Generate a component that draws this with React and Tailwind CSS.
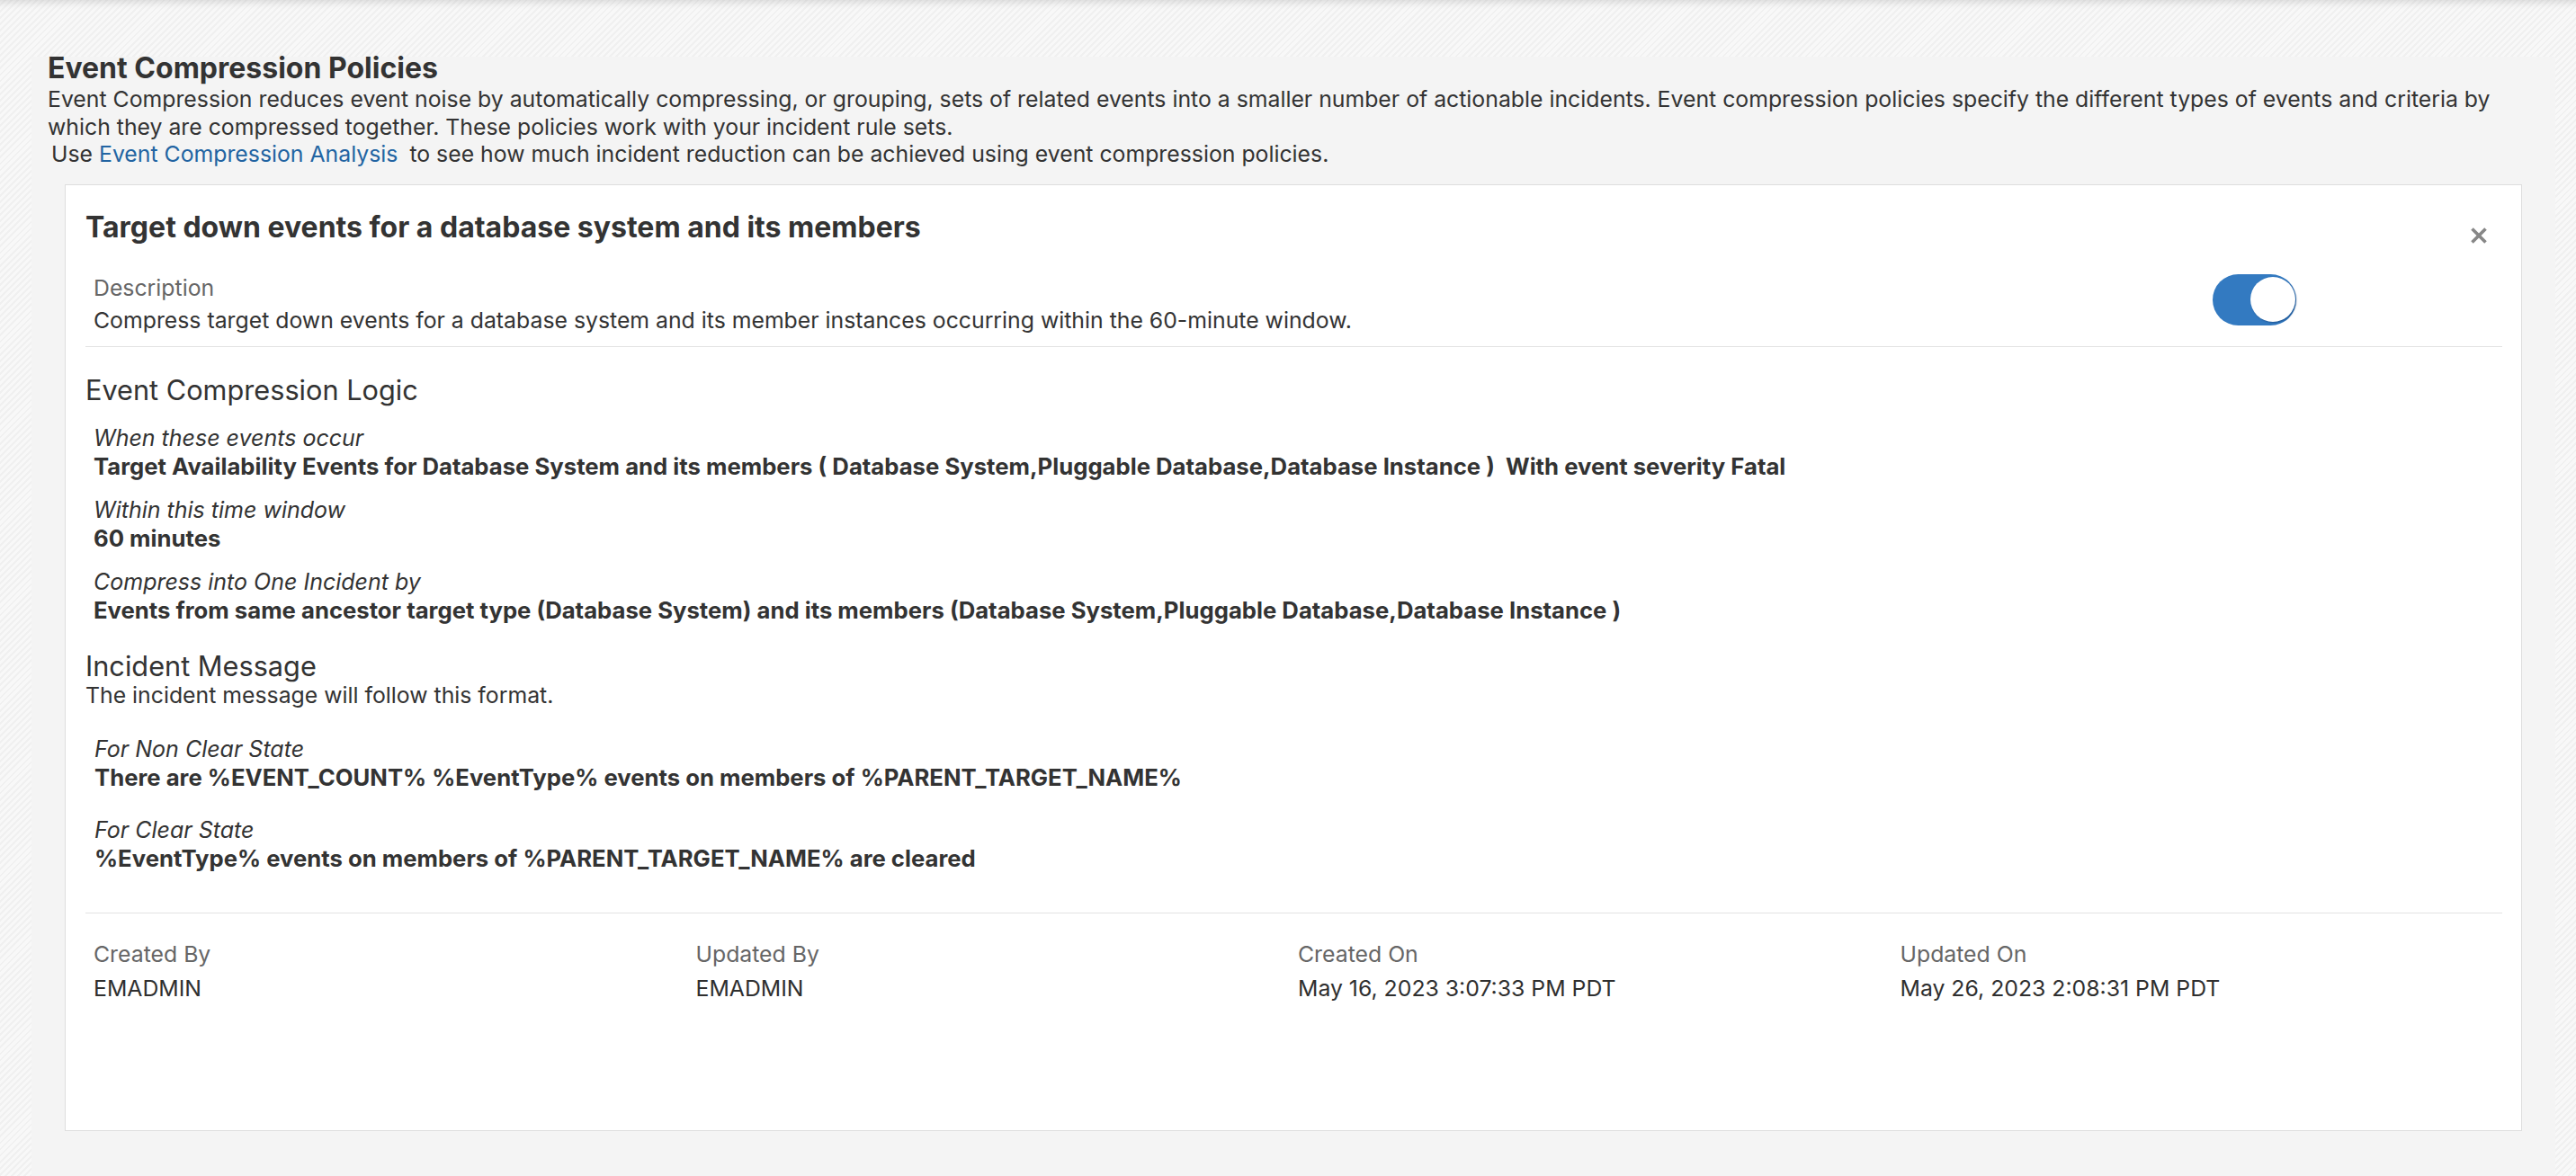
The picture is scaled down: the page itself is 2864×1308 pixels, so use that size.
import React from "react";

function Toggle() {
  return (
    <div className="relative mr-[229px] h-[57px] w-[93px] shrink-0 rounded-full bg-[#337ac1]">
      <div className="absolute right-[1px] top-[3.5px] h-[50px] w-[50px] rounded-full bg-white shadow-[1px_1px_2px_rgba(0,40,90,0.45)]" />
    </div>
  );
}

function CloseIcon() {
  return (
    <svg width="20" height="20" viewBox="0 0 20 20" className="block">
      <path d="M2.5 2.5 L17.5 17.5 M17.5 2.5 L2.5 17.5" stroke="#878787" strokeWidth="3.6" strokeLinecap="butt" fill="none" />
    </svg>
  );
}

function LogicItem({ label, value, className = "" }) {
  return (
    <div className={className}>
      <div className="text-[25px] italic leading-[31px] text-[#333333]">{label}</div>
      <div className="whitespace-nowrap text-[25.7px] font-bold leading-[31px] text-[#333333]">{value}</div>
    </div>
  );
}

function Meta({ label, value }) {
  return (
    <div>
      <div className="text-[24.8px] leading-[31px] text-[#666666]">{label}</div>
      <div className="mt-[7px] text-[24.8px] leading-[31px] text-[#2f2f2f]">{value}</div>
    </div>
  );
}

export default function App() {
  return (
    <div className="flex min-h-[1308px] flex-col bg-[repeating-linear-gradient(-45deg,#f0f0f0_0px,#f0f0f0_2px,#f8f8f8_2px,#f8f8f8_5px)] pl-[35px] pr-[23px] pt-[63px] font-['Inter',sans-serif] text-[#333333] shadow-[inset_0_10px_8px_-8px_rgba(0,0,0,0.14)]">
      <div className="flex-1 bg-[#f4f4f4] px-[18px]">
        <h1 className="text-[32px] font-bold leading-[26px] text-[#333333]">Event Compression Policies</h1>
        <div className="mt-[6px] whitespace-nowrap text-[24.8px] leading-[30.5px] text-[#333333]">
          <div>
            Event Compression reduces event noise by automatically compressing, or grouping, sets of related events into a smaller number of actionable incidents. Event compression policies specify the different types of events and criteria by
          </div>
          <div>which they are compressed together. These policies work with your incident rule sets.</div>
          <div className="pl-[4px]">
            Use <a className="mr-[6px] text-[#2264a2]">Event Compression Analysis</a> to see how much incident reduction can be achieved using event compression policies.
          </div>
        </div>

        <div className="mx-[19px] mt-[18px] border border-[#dedede] bg-white pb-[142px] pl-[22px] pr-[21px] pt-[29px]">
          <div className="flex items-start justify-between">
            <h2 className="text-[32px] font-bold leading-[36px] text-[#333333]">
              Target down events for a database system and its members
            </h2>
            <button className="mr-[16px] mt-[17px]">
              <CloseIcon />
            </button>
          </div>

          <div className="mt-[33px] flex items-start justify-between pl-[9px]">
            <div>
              <div className="text-[24.8px] leading-[31px] text-[#666666]">Description</div>
              <div className="mt-[5px] text-[24.8px] leading-[31px] text-[#333333]">
                Compress target down events for a database system and its member instances occurring within the 60-minute window.
              </div>
            </div>
            <Toggle />
          </div>

          <div className="mt-[13px] h-px bg-[#e3e3e3]" />

          <h3 className="mt-[30px] text-[30.7px] font-normal leading-[36px] text-[#333333]">Event Compression Logic</h3>
          <div className="mt-[20px] pl-[9px]">
            <LogicItem
              label="When these events occur"
              value={"Target Availability Events for Database System and its members ( Database System,Pluggable Database,Database Instance )\u00a0 With event severity Fatal"}
            />
            <LogicItem className="mt-[18px]" label="Within this time window" value="60 minutes" />
            <LogicItem
              className="mt-[18px]"
              label="Compress into One Incident by"
              value="Events from same ancestor target type (Database System) and its members (Database System,Pluggable Database,Database Instance )"
            />
          </div>

          <h3 className="mt-[29px] text-[30.7px] font-normal leading-[36px] text-[#333333]">Incident Message</h3>
          <div className="-mt-[1px] text-[24.8px] leading-[31px] text-[#333333]">The incident message will follow this format.</div>
          <div className="mt-[29px] pl-[10px]">
            <LogicItem
              label="For Non Clear State"
              value="There are %EVENT_COUNT% %EventType% events on members of %PARENT_TARGET_NAME%"
            />
            <LogicItem
              className="mt-[28px]"
              label="For Clear State"
              value="%EventType% events on members of %PARENT_TARGET_NAME% are cleared"
            />
          </div>

          <div className="mt-[45px] h-px bg-[#e3e3e3]" />

          <div className="mt-[30px] grid grid-cols-4 pl-[9px]">
            <Meta label="Created By" value="EMADMIN" />
            <Meta label="Updated By" value="EMADMIN" />
            <Meta label="Created On" value="May 16, 2023 3:07:33 PM PDT" />
            <Meta label="Updated On" value="May 26, 2023 2:08:31 PM PDT" />
          </div>
        </div>
      </div>
    </div>
  );
}
